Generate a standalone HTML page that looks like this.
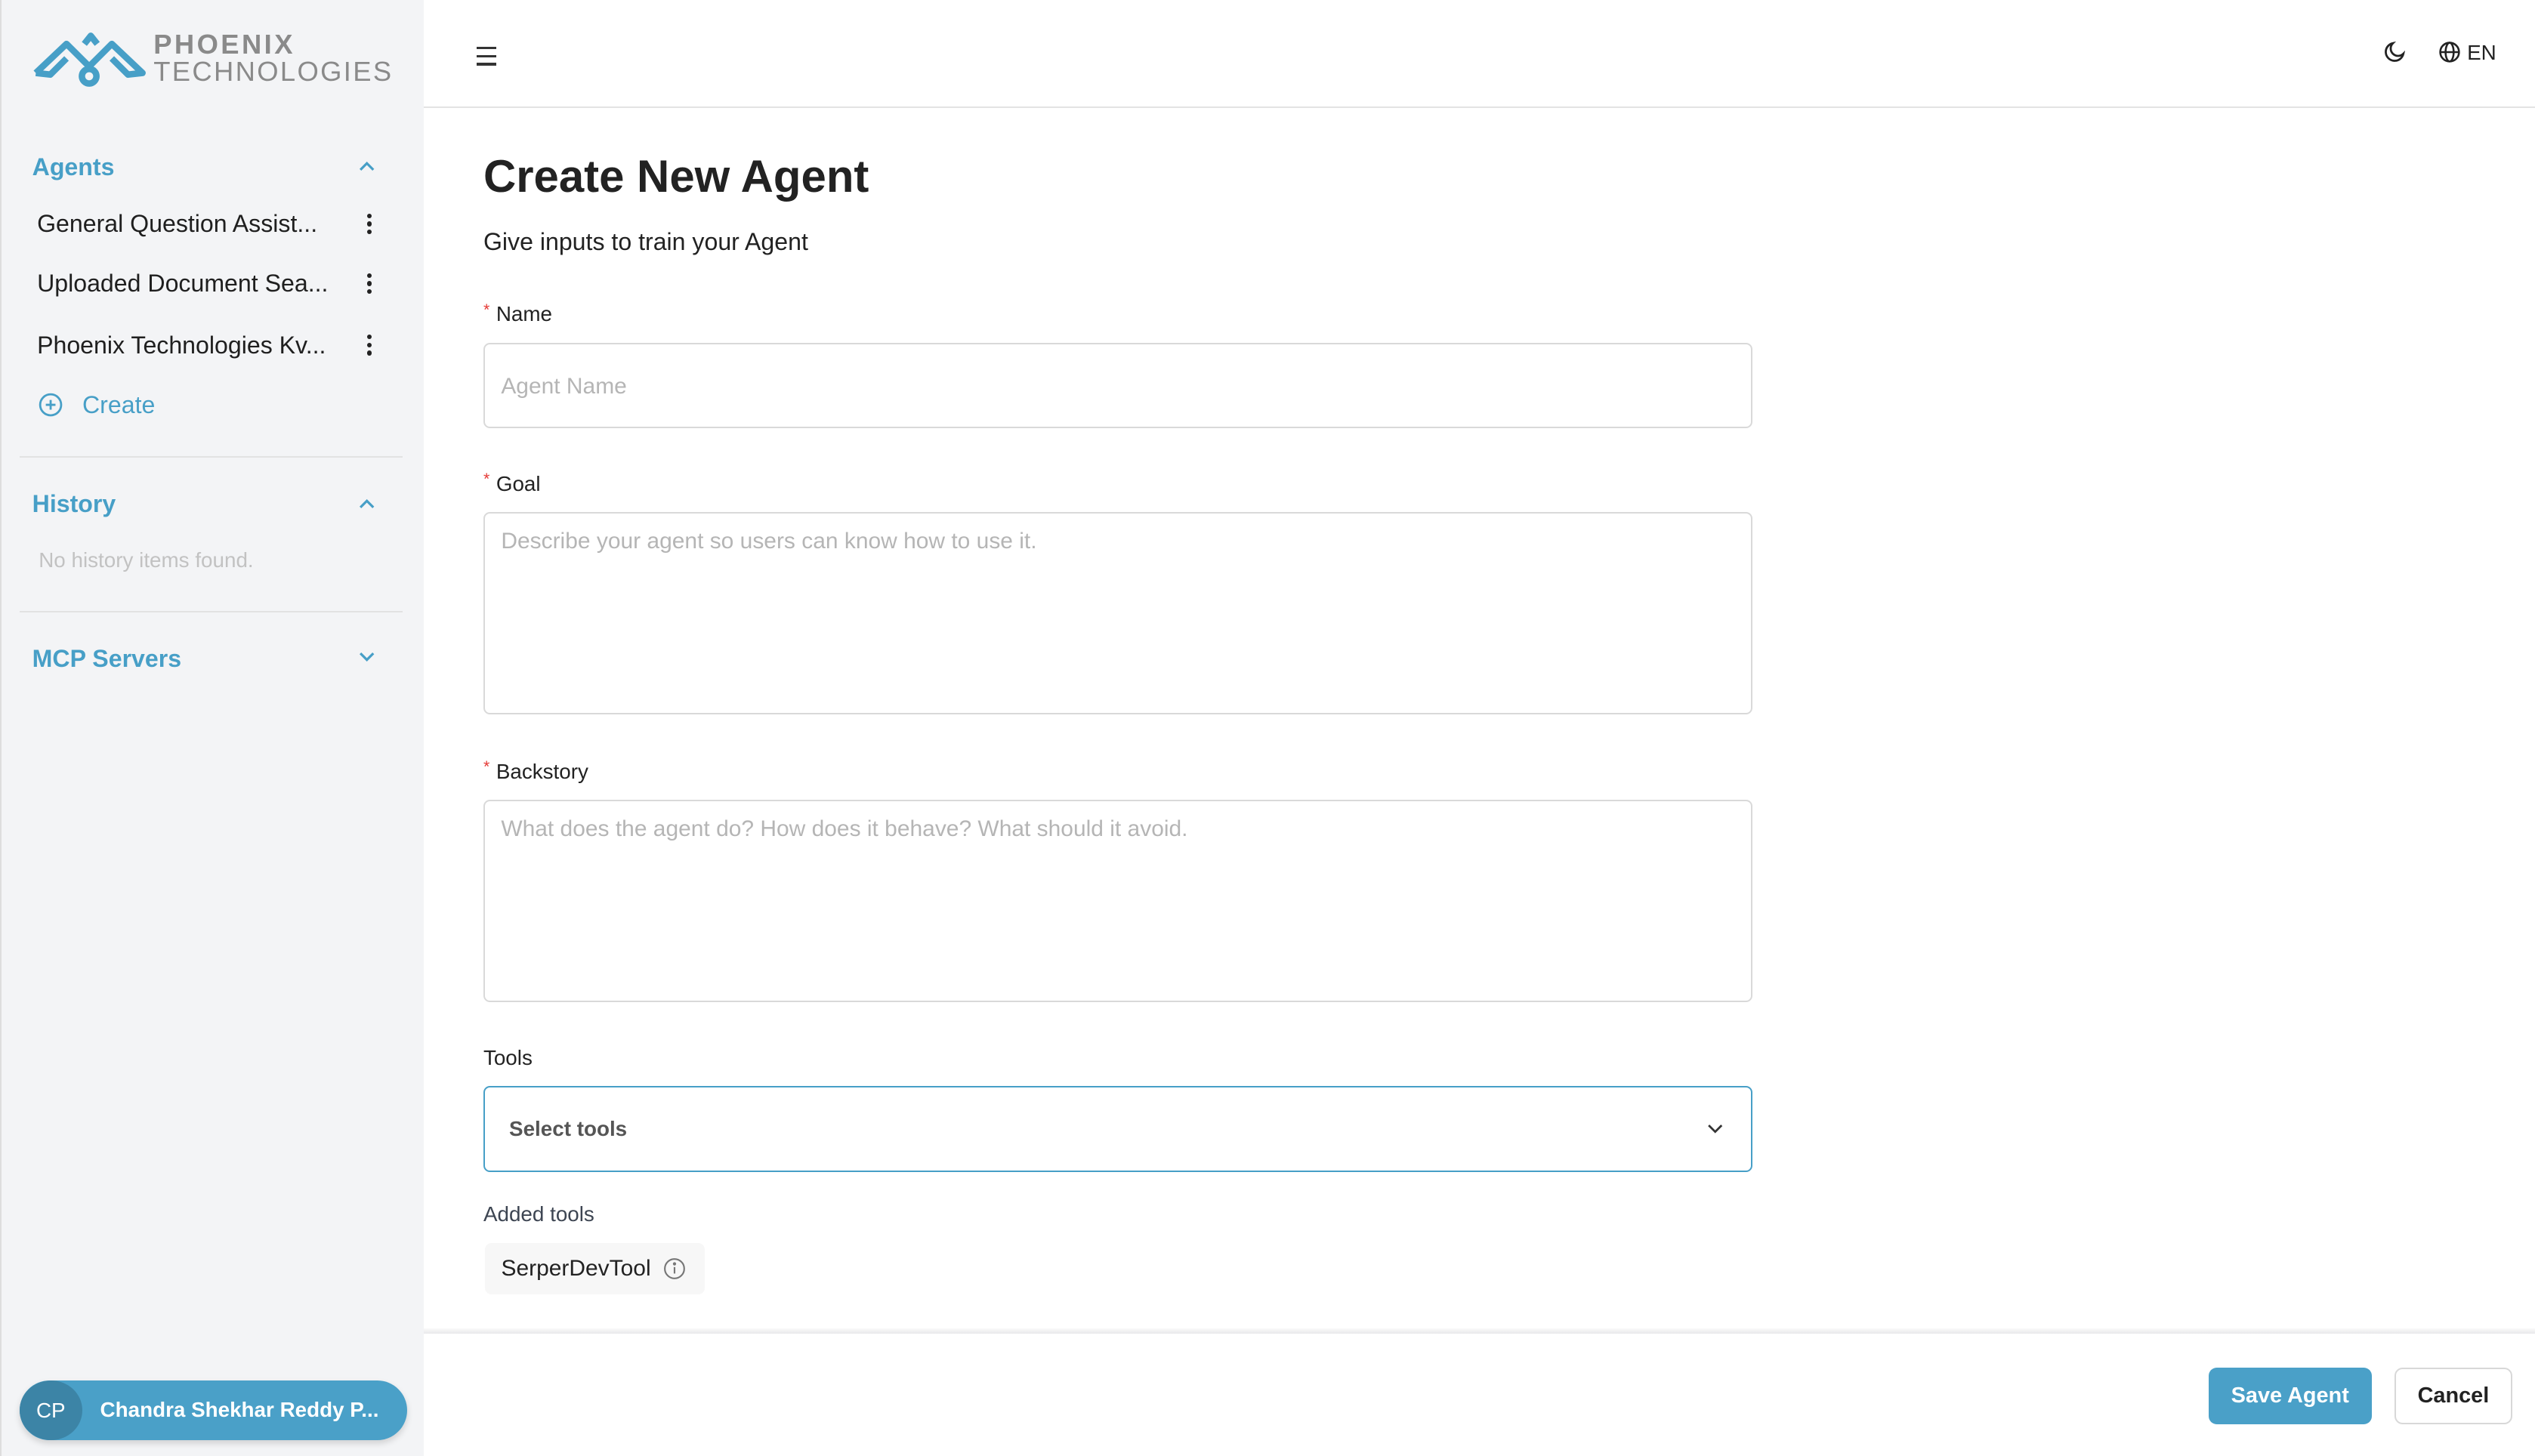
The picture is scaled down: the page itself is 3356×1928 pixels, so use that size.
<!DOCTYPE html>
<html><head><meta charset="utf-8"><style>
html,body{margin:0;padding:0;background:#fff;overflow:hidden}
body{width:3356px;height:1928px}
#r{position:absolute;left:0;top:0;width:1568px;height:901px;zoom:2.14031;font-family:"Liberation Sans",sans-serif;color:#1f1f1f}
.a{position:absolute}
#side{left:0;top:0;width:262px;height:901px;background:#f3f4f6;border-left:1px solid #ddd;box-sizing:border-box}
.sec{color:#479fc7;font-size:15px;font-weight:bold}
.item{font-size:15px;color:#1f1f1f}
.dots{width:3px}
.dots i{display:block;width:3px;height:3px;border-radius:50%;background:#222;margin-bottom:2px}
.lbl{font-size:13px;color:#222}
.lbl b{color:#e53935;font-weight:normal;font-size:10px;position:relative;top:-4px;margin-right:4px}
.inp{border:1px solid #d9d9d9;border-radius:4px;background:#fff;box-sizing:border-box;left:299px;width:785px;color:#b5b5b5;font-size:14px;padding:0 10px}
</style></head><body><div id="r">
<div id="side" class="a">
 <svg class="a" style="left:18px;top:19px" width="72" height="36" viewBox="0 0 72 36" fill="none" stroke="#479fc7" stroke-width="4" stroke-linejoin="round">
  <path d="M3 26 L22 8 L36 22 L50 8 L69 26 L60 27 L50 17"/><path d="M3 26 L12 27 L22 17"/><path d="M33 8 L37 3 L41 8"/><circle cx="36" cy="28" r="4.5"/>
 </svg>
 <div class="a" style="left:94px;top:19px;font-size:17px;font-weight:bold;color:#8a8a8a;letter-spacing:1.6px;line-height:17px">PHOENIX</div>
 <div class="a" style="left:94px;top:36px;font-size:17px;color:#8a8a8a;letter-spacing:1.1px;line-height:17px">TECHNOLOGIES</div>
 <div class="a sec" style="left:19px;top:95px">Agents</div>
 <svg class="a" style="left:221px;top:99px" width="10" height="7" viewBox="0 0 10 7"><path d="M1 6L5 2L9 6" stroke="#479fc7" stroke-width="1.5" fill="none"/></svg>
 <div class="a item" style="left:22px;top:130px">General Question Assist...</div>
 <div class="a item" style="left:22px;top:167px">Uploaded Document Sea...</div>
 <div class="a item" style="left:22px;top:205px">Phoenix Technologies Kv...</div>
 <div class="a dots" style="left:226px;top:132px"><i></i><i></i><i></i></div>
 <div class="a dots" style="left:226px;top:169px"><i></i><i></i><i></i></div>
 <div class="a dots" style="left:226px;top:207px"><i></i><i></i><i></i></div>
 <svg class="a" style="left:23px;top:243px" width="15" height="15" viewBox="0 0 15 15" fill="none" stroke="#479fc7" stroke-width="1.3"><circle cx="7.5" cy="7.5" r="6.5"/><path d="M7.5 4.5v6M4.5 7.5h6"/></svg>
 <div class="a" style="left:50px;top:242px;font-size:15px;color:#479fc7">Create</div>
 <div class="a" style="left:11px;top:282px;width:237px;height:1px;background:#e2e2e2"></div>
 <div class="a sec" style="left:19px;top:303px">History</div>
 <svg class="a" style="left:221px;top:308px" width="10" height="7" viewBox="0 0 10 7"><path d="M1 6L5 2L9 6" stroke="#479fc7" stroke-width="1.5" fill="none"/></svg>
 <div class="a" style="left:23px;top:339px;font-size:13px;color:#c2c2c2">No history items found.</div>
 <div class="a" style="left:11px;top:378px;width:237px;height:1px;background:#e2e2e2"></div>
 <div class="a sec" style="left:19px;top:399px">MCP Servers</div>
 <svg class="a" style="left:221px;top:403px" width="10" height="7" viewBox="0 0 10 7"><path d="M1 1L5 5L9 1" stroke="#479fc7" stroke-width="1.5" fill="none"/></svg>
 <div class="a" style="left:11px;top:854px;width:240px;height:37px;border-radius:19px;background:#4aa0c8;box-shadow:0 2px 4px rgba(0,0,0,.15)"></div>
 <div class="a" style="left:11px;top:854px;width:39px;height:37px;border-radius:50%;background:#3c84a6;color:#fff;font-size:13px;line-height:37px;text-align:center">CP</div>
 <div class="a" style="left:61px;top:865px;color:#fff;font-size:13px;font-weight:bold">Chandra Shekhar Reddy P...</div>
</div>
<div class="a" style="left:262px;top:66px;width:1306px;height:1px;background:#e3e3e3"></div>
<div class="a" style="left:295px;top:29px;width:12px"><div style="height:1.5px;background:#333;margin-bottom:3.5px"></div><div style="height:1.5px;background:#333;margin-bottom:3.5px"></div><div style="height:1.5px;background:#333"></div></div>
<svg class="a" style="left:1474px;top:25px" width="14" height="14" viewBox="0 0 14 14"><path d="M6 1.5A5.5 5.5 0 1 0 12.5 8 4.2 4.2 0 0 1 6 1.5Z" fill="none" stroke="#222" stroke-width="1.3"/></svg>
<svg class="a" style="left:1508px;top:25px" width="14" height="14" viewBox="0 0 14 14" fill="none" stroke="#222" stroke-width="1.2"><circle cx="7" cy="7" r="5.8"/><ellipse cx="7" cy="7" rx="2.5" ry="5.8"/><path d="M1.2 7h11.6"/></svg>
<div class="a" style="left:1526px;top:25px;font-size:13px;color:#222">EN</div>
<div class="a" style="left:299px;top:93px;font-size:28px;font-weight:bold;color:#222">Create New Agent</div>
<div class="a" style="left:299px;top:141px;font-size:15px;color:#222">Give inputs to train your Agent</div>
<div class="a lbl" style="left:299px;top:187px"><b>*</b>Name</div>
<div class="a inp" style="top:212px;height:53px;line-height:52px">Agent Name</div>
<div class="a lbl" style="left:299px;top:292px"><b>*</b>Goal</div>
<div class="a inp" style="top:317px;height:125px;padding-top:9px">Describe your agent so users can know how to use it.</div>
<div class="a lbl" style="left:299px;top:470px"><b>*</b>Backstory</div>
<div class="a inp" style="top:495px;height:125px;padding-top:9px">What does the agent do? How does it behave? What should it avoid.</div>
<div class="a lbl" style="left:299px;top:647px">Tools</div>
<div class="a inp" style="top:672px;height:53px;line-height:51px;border-color:#479fc7;color:#555;font-weight:bold;font-size:13px;padding-left:15px">Select tools</div>
<svg class="a" style="left:1056px;top:695px" width="10" height="7" viewBox="0 0 10 7"><path d="M1 1L5 5L9 1" stroke="#333" stroke-width="1.3" fill="none"/></svg>
<div class="a" style="left:299px;top:744px;font-size:13px;color:#3d4552">Added tools</div>
<div class="a" style="left:300px;top:769px;width:136px;height:32px;background:#f7f7f7;border-radius:4px"></div>
<div class="a" style="left:310px;top:777px;font-size:14px;color:#222">SerperDevTool</div>
<svg class="a" style="left:410px;top:778px" width="14" height="14" viewBox="0 0 14 14" fill="none" stroke="#777" stroke-width="1"><circle cx="7" cy="7" r="6"/><path d="M7 6v4"/><circle cx="7" cy="4" r=".5" fill="#777"/></svg>
<div class="a" style="left:262px;top:822px;width:1306px;height:3px;background:linear-gradient(#fafafa,#e8e8ea)"></div>
<div class="a" style="left:1366px;top:846px;width:101px;height:35px;background:#4aa0c8;border-radius:5px;color:#fff;font-size:13.5px;font-weight:bold;text-align:center;line-height:35px">Save Agent</div>
<div class="a" style="left:1481px;top:846px;width:73px;height:35px;box-sizing:border-box;border:1px solid #d8d8d8;border-radius:5px;color:#222;font-size:13.5px;font-weight:bold;text-align:center;line-height:33px">Cancel</div>
</div></body></html>
